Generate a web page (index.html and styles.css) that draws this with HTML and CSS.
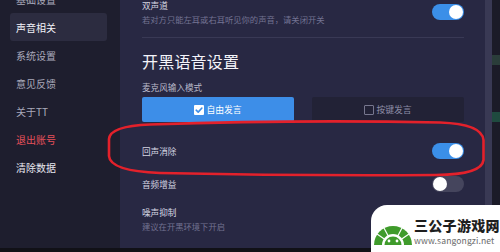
FILE: index.html
```html
<!DOCTYPE html>
<html lang="zh">
<head>
<meta charset="utf-8">
<link rel="stylesheet" href="styles.css">
</head>
<body>
<div class="app">
  <div class="window">
    <nav class="sidebar">
      <div class="nav-item">基础设置</div>
      <div class="nav-item active">声音相关</div>
      <div class="nav-item">系统设置</div>
      <div class="nav-item">意见反馈</div>
      <div class="nav-item">关于TT</div>
      <div class="nav-item danger">退出账号</div>
      <div class="nav-item bright">清除数据</div>
    </nav>
    <main class="panel">
      <section class="top-section">
        <div class="row-text">
          <div class="label">双声道</div>
          <div class="desc">若对方只能左耳或右耳听见你的声音，请关闭开关</div>
        </div>
        <div class="toggle on top-toggle"><span class="knob"></span></div>
      </section>
      <h1 class="title">开黑语音设置</h1>
      <div class="label mic-label">麦克风输入模式</div>
      <div class="modes">
        <div class="mode selected"><span class="check on"><svg viewBox="0 0 10 10" width="10" height="10"><path d="M2.2 5.2 L4.2 7.1 L7.9 3" fill="none" stroke="#3d8ee8" stroke-width="1.6" stroke-linecap="round" stroke-linejoin="round"/></svg></span>自由发言</div>
        <div class="mode"><span class="check"></span>按键发言</div>
      </div>
      <div class="setting-row">
        <div class="label">回声消除</div>
        <div class="toggle on"><span class="knob"></span></div>
      </div>
      <div class="setting-row">
        <div class="label">音频增益</div>
        <div class="toggle"><span class="knob"></span></div>
      </div>
      <div class="label noise-label">噪声抑制</div>
      <div class="desc">建议在开黑环境下开启</div>
    </main>
    <div class="edge"></div>
    <div class="outside">
      <span class="glow g1"></span>
      <span class="glow g2"></span>
    </div>
  </div>
  <div class="bottom-band"></div>

  <svg class="annotation" width="500" height="252" viewBox="0 0 500 252">
    <path d="M150 124.5 Q300 119.5 440 122.5 Q482 124 483.5 140 L483.5 160 Q482 174.5 436 175 Q300 176 160 173 Q110 171 109 156 L109 139 Q110 126 150 124.5 Z" fill="none" stroke="#e3212b" stroke-width="2.6"/>
  </svg>

  <div class="watermark">
    <svg class="wm-logo" width="40" height="34" viewBox="0 0 40 34">
      <path d="M1 33 A19 19 0 0 1 39 33 Z" fill="#3f9b2b"/>
      <g stroke="#ffffff" stroke-width="1.2">
        <line x1="20" y1="33" x2="4" y2="22"/>
        <line x1="20" y1="33" x2="11" y2="16"/>
        <line x1="20" y1="33" x2="29" y2="16"/>
        <line x1="20" y1="33" x2="36" y2="22"/>
      </g>
      <path d="M9 33 A11 11 0 0 1 31 33 Z" fill="#ffffff"/>
      <path d="M11.5 33 A8.5 8.5 0 0 1 28.5 33 Z" fill="#3f9b2b"/>
      <circle cx="16" cy="29" r="1.4" fill="#ffffff"/>
      <circle cx="24" cy="29" r="1.4" fill="#ffffff"/>
    </svg>
    <div class="wm-text">
      <div class="wm-name">三公子游戏网</div>
      <div class="wm-url">www.sangongzi.net</div>
    </div>
  </div>
</div>
</body>
</html>
```
FILE: styles.css
```css
* { box-sizing: border-box; margin: 0; padding: 0; }
html, body { width: 500px; height: 252px; overflow: hidden; background: #121219; }
body { font-family: "Noto Sans CJK SC", "Noto Sans", sans-serif; color: #e6e6f0; }

.app { position: relative; width: 500px; height: 252px; display: flex; flex-direction: column; }
.window { display: flex; height: 248px; }
.bottom-band { height: 4px; background: #111117; }

.sidebar { width: 120px; background: #1e1e2e; padding-top: 0; margin-top: 0; display: flex; flex-direction: column; overflow: hidden; }
.nav-item { height: 28px; flex: none; margin-left: 10px; width: 97px; padding-left: 6px; display: flex; align-items: center; font-size: 10px; color: #a9a9bb; border-radius: 3px; }
.nav-item:first-child { margin-top: -15px; }
.nav-item.active { background: #2c2c40; color: #f2f2f8; }
.nav-item.danger { color: #e5505a; }
.nav-item.bright { color: #e8e8f0; }

.panel { width: 365px; background: #282843; padding: 0 21px 0 22px; display: flex; flex-direction: column; }
.top-section { height: 38px; border-bottom: 1px solid #393955; display: flex; justify-content: space-between; align-items: flex-start; flex: none; }
.top-toggle { margin-top: 4px; }
.label { font-size: 8.6px; line-height: 10px; color: #d6d6e2; white-space: nowrap; }
.desc { font-size: 8.3px; line-height: 12px; margin-top: 3px; color: #737392; white-space: nowrap; }
.title { font-size: 16px; font-weight: 400; line-height: 20px; margin-top: 13px; color: #f4f4fa; letter-spacing: 0.2px; }
.mic-label { margin-top: 11px; color: #b9b9ca; }

.modes { display: flex; gap: 18px; margin-top: 5px; flex: none; }
.mode { width: 152px; height: 25px; border-radius: 2px; background: #222236; display: flex; align-items: center; justify-content: center; font-size: 8.8px; color: #8e8ea6; gap: 2px; }
.mode.selected { background: #3d8ee8; color: #ffffff; }
.check { width: 10px; height: 10px; border: 1px solid #77778e; border-radius: 1px; display: inline-flex; }
.check.on { background: #ffffff; border: none; }

.setting-row { height: 33px; display: flex; align-items: center; justify-content: space-between; flex: none; }
.setting-row:first-of-type { margin-top: 12px; }
.modes + .setting-row { margin-top: 12px; }

.toggle { width: 32px; height: 16px; border-radius: 8px; background: #45455d; position: relative; flex: none; }
.toggle.on { background: #3b8fe8; }
.knob { position: absolute; top: 1px; left: 1px; width: 14px; height: 14px; border-radius: 50%; background: #ffffff; }
.toggle.on .knob { left: 17px; }

.noise-label { margin-top: 7px; }

.edge { width: 7px; background: #393954; }
.outside { width: 8px; background: #1b1b28; position: relative; }
.glow { position: absolute; left: 0; width: 8px; height: 10px; background: #2a3d3a; }
.g1 { top: 55px; }
.g2 { top: 112px; background: #1f4a3f; }

.annotation { position: absolute; left: 0; top: 0; pointer-events: none; }

.watermark { position: absolute; right: 0; bottom: 0; width: 129px; height: 47px; background: #ffffff; border-top-left-radius: 16px; display: flex; align-items: flex-end; padding: 0 0 6px 2px; gap: 1px; }
.wm-logo { flex: none; }
.wm-text { display: flex; flex-direction: column; padding-bottom: 0; }
.wm-name { font-size: 14px; font-weight: 900; line-height: 17px; color: #1f1f1f; letter-spacing: 0.3px; white-space: nowrap; }
.wm-url { font-size: 8.6px; line-height: 12px; color: #6a6a6a; white-space: nowrap; letter-spacing: 0.1px; }
```
